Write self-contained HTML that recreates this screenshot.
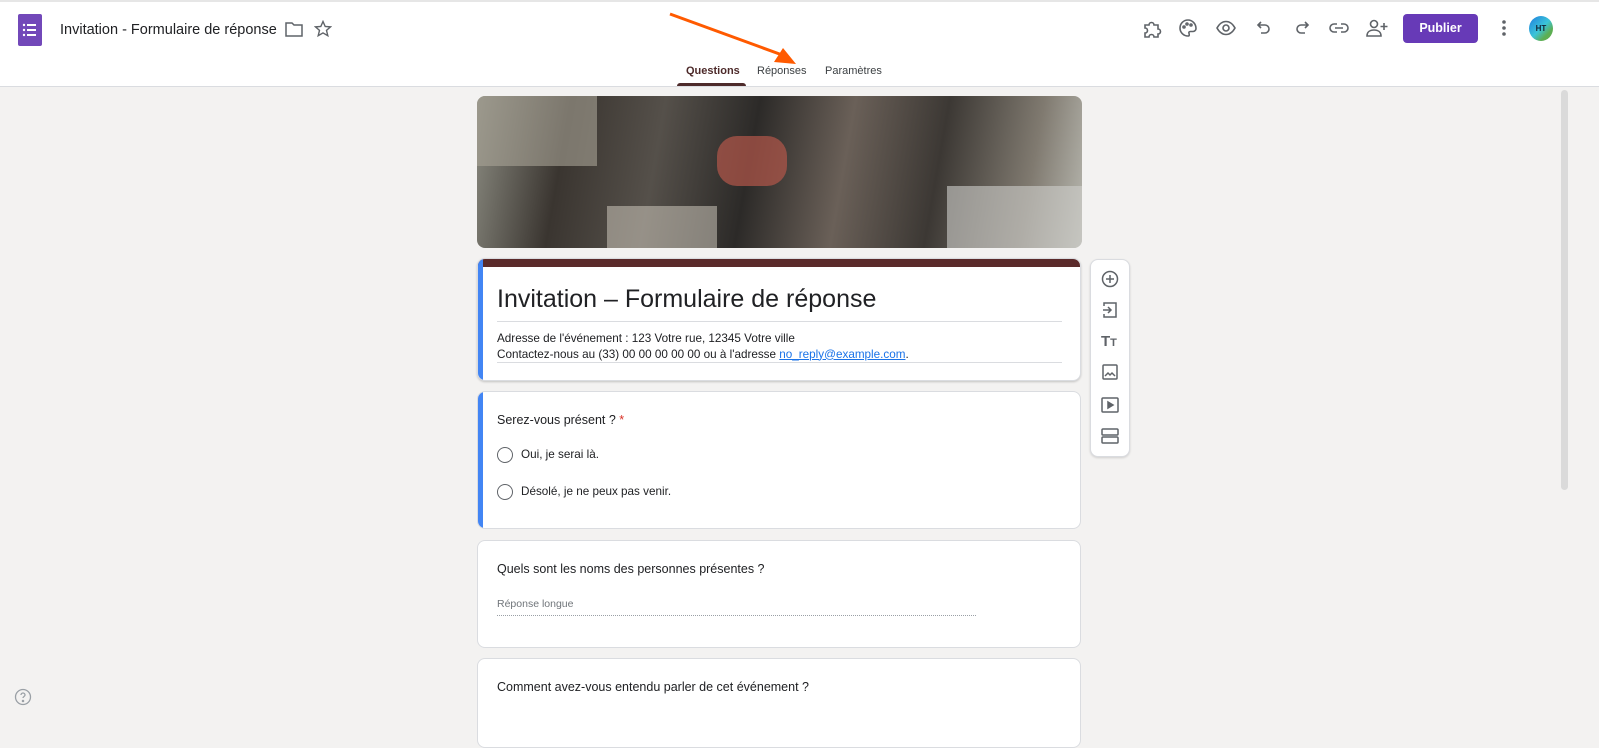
<!DOCTYPE html>
<html><head><meta charset="utf-8"><style>
*{box-sizing:border-box;margin:0;padding:0}
body{width:1599px;height:730px;overflow:hidden;background:#f3f2f1;font-family:"Liberation Sans",Arial,sans-serif;color:#202124;position:relative}
.top{position:absolute;left:0;top:0;width:1599px;height:87px;background:#fff;border-top:2px solid #e6e6e6;border-bottom:1px solid #dadce0}
.abs{position:absolute}
.card{position:absolute;left:477px;width:604px;background:#fff;border:1px solid #dadce0;border-radius:8px}
.ic{position:absolute;fill:none;stroke:#5f6368;stroke-width:1.8}
.radio{position:absolute;width:16px;height:16px;border:1.5px solid #5f6368;border-radius:50%}
.t14{font-size:12.5px;color:#202124}
</style></head><body>
<div class="top"></div>
<svg class="abs" style="left:18px;top:14px" width="24" height="32"><rect width="24" height="32" rx="2" fill="#7248b9"/><g fill="#fff"><circle cx="6" cy="11" r="1.2"/><circle cx="6" cy="16" r="1.2"/><circle cx="6" cy="21" r="1.2"/><rect x="9" y="10" width="9" height="2"/><rect x="9" y="15" width="9" height="2"/><rect x="9" y="20" width="9" height="2"/></g></svg>
<div class="abs" style="left:60px;top:22px;font-size:14.5px;color:#202124">Invitation - Formulaire de réponse</div>
<svg class="ic" style="left:285px;top:21px;stroke-width:1.5" width="18" height="16"><path d="M1 2h6l2 2h8v11H1z"/></svg>
<svg class="ic" style="left:314px;top:20px;stroke-width:1.4" width="18" height="18"><path d="M9 1.5l2.2 5 5.3.4-4 3.5 1.3 5.3L9 12.9 4.2 15.7l1.3-5.3-4-3.5 5.3-.4z"/></svg>
<svg class="ic" style="left:1142px;top:19px;stroke-width:1.6" width="20" height="20"><path d="M3 6h4a2.5 2.5 0 015 0h4v4a2.5 2.5 0 010 5v3h-4a2.5 2.5 0 00-5 0H3v-4a2.5 2.5 0 000-5z"/></svg>
<svg class="ic" style="left:1178px;top:18px;stroke-width:1.6" width="20" height="20"><path d="M10 2a8 8 0 000 16c1.5 0 1.5-1.5 1-2.5s0-2 1.5-2H15a3 3 0 003-3c0-4.5-3.5-8.5-8-8.5z"/><circle cx="6" cy="9" r="1"/><circle cx="9" cy="6" r="1"/><circle cx="13" cy="7" r="1"/></svg>
<svg class="ic" style="left:1216px;top:20px;stroke-width:1.6" width="20" height="16"><path d="M1 8c2.5-4.5 5.5-6.5 9-6.5s6.5 2 9 6.5c-2.5 4.5-5.5 6.5-9 6.5S3.5 12.5 1 8z"/><circle cx="10" cy="8" r="3"/></svg>
<svg class="ic" style="left:1256px;top:20px;stroke-width:1.6" width="16" height="16"><path d="M5 2L2 5l3 3M2 5h7a4 4 0 010 8H5"/></svg>
<svg class="ic" style="left:1294px;top:20px;stroke-width:1.6" width="16" height="16"><path d="M11 2l3 3-3 3M14 5H7a4 4 0 000 8h4"/></svg>
<svg class="ic" style="left:1329px;top:21px;stroke-width:1.6" width="20" height="14"><path d="M8 3H5a4 4 0 000 8h3M12 3h3a4 4 0 010 8h-3M6 7h8"/></svg>
<svg class="ic" style="left:1366px;top:18px;stroke-width:1.6" width="22" height="20"><circle cx="8" cy="6" r="3.5"/><path d="M1 18c0-4 3-6 7-6s7 2 7 6zM18 5v7M14.5 8.5h7"/></svg>
<div class="abs" style="left:1403px;top:14px;width:75px;height:29px;background:#673ab7;border-radius:4px;color:#fff;font-size:12.5px;font-weight:bold;text-align:center;line-height:29px">Publier</div>
<svg class="abs" style="left:1500px;top:19px" width="8" height="18" fill="#5f6368"><circle cx="4" cy="3" r="1.8"/><circle cx="4" cy="9" r="1.8"/><circle cx="4" cy="15" r="1.8"/></svg>
<div class="abs" style="left:1529px;top:16px;width:24px;height:25px;border-radius:50%;background:linear-gradient(135deg,#1f7de0,#3bc4d8 50%,#5dae52 75%);font-size:8px;font-weight:bold;color:#123;text-align:center;line-height:25px">HT</div>
<div class="abs" style="left:686px;top:65px;font-size:11px;color:#4d2a2a;font-weight:bold">Questions</div>
<div class="abs" style="left:677px;top:83px;width:69px;height:3px;background:#4d2a2a;border-radius:3px 3px 0 0"></div>
<div class="abs" style="left:757px;top:65px;font-size:11px;color:#3c4043">Réponses</div>
<div class="abs" style="left:825px;top:65px;font-size:11px;color:#3c4043">Paramètres</div>
<svg class="abs" style="left:660px;top:0" width="160" height="80"><line x1="10" y1="14" x2="125" y2="56" stroke="#ff5a00" stroke-width="3"/><path d="M136 64l-22-2 9-14z" fill="#ff5a00"/></svg>
<div class="abs" style="left:1561px;top:90px;width:7px;height:400px;background:#dadada;border-radius:4px"></div>
<div class="abs" style="left:477px;top:96px;width:605px;height:152px;border-radius:8px;overflow:hidden;background:linear-gradient(100deg,#8a8a80 0%,#3a3530 15%,#55504a 30%,#2c2a28 45%,#6a6058 60%,#3c3834 75%,#807a70 90%,#b8b8b0 100%)">
<div class="abs" style="left:0;top:0;width:120px;height:70px;background:#a9a496;opacity:.6"></div>
<div class="abs" style="left:470px;top:90px;width:135px;height:62px;background:#cfcfcb;opacity:.6"></div>
<div class="abs" style="left:240px;top:40px;width:70px;height:50px;background:#b4574a;opacity:.7;border-radius:20px"></div>
<div class="abs" style="left:130px;top:110px;width:110px;height:42px;background:#d8d2c6;opacity:.5"></div>
</div>
<div class="card" style="top:258px;height:123px;overflow:hidden;box-shadow:0 1px 2px rgba(0,0,0,.2)">
<div class="abs" style="left:0;top:0;width:604px;height:8px;background:#5b2b2b"></div>
<div class="abs" style="left:0;top:0;width:5px;height:123px;background:#4285f4"></div>
<div class="abs" style="left:19px;top:26px;font-size:25px;color:#202124">Invitation – Formulaire de réponse</div>
<div class="abs" style="left:19px;top:62px;width:565px;height:1px;background:#dadce0"></div>
<div class="abs" style="left:19px;top:72px;font-size:11.7px;line-height:15.5px">Adresse de l'événement : 123 Votre rue, 12345 Votre ville<br>Contactez-nous au (33) 00 00 00 00 00 ou à l'adresse <span style="color:#1a73e8;text-decoration:underline">no_reply@example.com</span>.</div>
<div class="abs" style="left:19px;top:103px;width:565px;height:1px;background:#dadce0"></div>
</div>
<div class="card" style="top:391px;height:138px;overflow:hidden">
<div class="abs" style="left:0;top:0;width:5px;height:138px;background:#4285f4"></div>
<div class="abs t14" style="left:19px;top:21px">Serez-vous présent ? <span style="color:#d93025">*</span></div>
<div class="radio" style="left:19px;top:55px"></div>
<div class="abs" style="left:43px;top:56px;font-size:11.7px">Oui, je serai là.</div>
<div class="radio" style="left:19px;top:92px"></div>
<div class="abs" style="left:43px;top:93px;font-size:11.7px">Désolé, je ne peux pas venir.</div>
</div>
<div class="card" style="top:540px;height:108px">
<div class="abs t14" style="left:19px;top:21px">Quels sont les noms des personnes présentes ?</div>
<div class="abs" style="left:19px;top:57px;font-size:10.5px;color:#70757a">Réponse longue</div>
<div class="abs" style="left:19px;top:74px;width:479px;border-top:1px dotted #9aa0a6"></div>
</div>
<div class="card" style="top:658px;height:90px">
<div class="abs t14" style="left:19px;top:21px">Comment avez-vous entendu parler de cet événement ?</div>
</div>
<div class="abs" style="left:1090px;top:259px;width:40px;height:198px;background:#fff;border:1px solid #dadce0;border-radius:8px;box-shadow:0 1px 2px rgba(0,0,0,.15)"></div>
<svg class="ic" style="left:1101px;top:270px;stroke-width:1.5" width="18" height="18"><circle cx="9" cy="9" r="7.5"/><path d="M9 5v8M5 9h8"/></svg>
<svg class="ic" style="left:1102px;top:301px;stroke-width:1.5" width="16" height="18"><path d="M2 5V2h12v14H2v-3M1 9h8M6 6l3 3-3 3"/></svg>
<div class="abs" style="left:1101px;top:333px;font-size:15px;font-weight:bold;color:#5f6368">T<span style="font-size:11px">T</span></div>
<svg class="ic" style="left:1102px;top:364px;stroke-width:1.5" width="16" height="16"><rect x="1" y="1" width="14" height="14" rx="1"/><path d="M3 12l3-3 2 2 2-2 3 3"/></svg>
<svg class="ic" style="left:1101px;top:397px;stroke-width:1.5" width="18" height="16"><rect x="1" y="1" width="16" height="14" rx="1"/><path d="M7 5l5 3-5 3z" fill="#5f6368"/></svg>
<svg class="ic" style="left:1101px;top:428px;stroke-width:1.5" width="18" height="16"><rect x="1" y="1" width="16" height="6" rx="1"/><rect x="1" y="9" width="16" height="6" rx="1"/></svg>
<svg class="ic" style="left:14px;top:688px;stroke:#9aa0a6;stroke-width:1.3" width="18" height="18"><circle cx="9" cy="9" r="7.5"/><path d="M7 7a2 2 0 114 0c0 1.5-2 1.5-2 3"/><circle cx="9" cy="13" r=".6"/></svg>
</body></html>
